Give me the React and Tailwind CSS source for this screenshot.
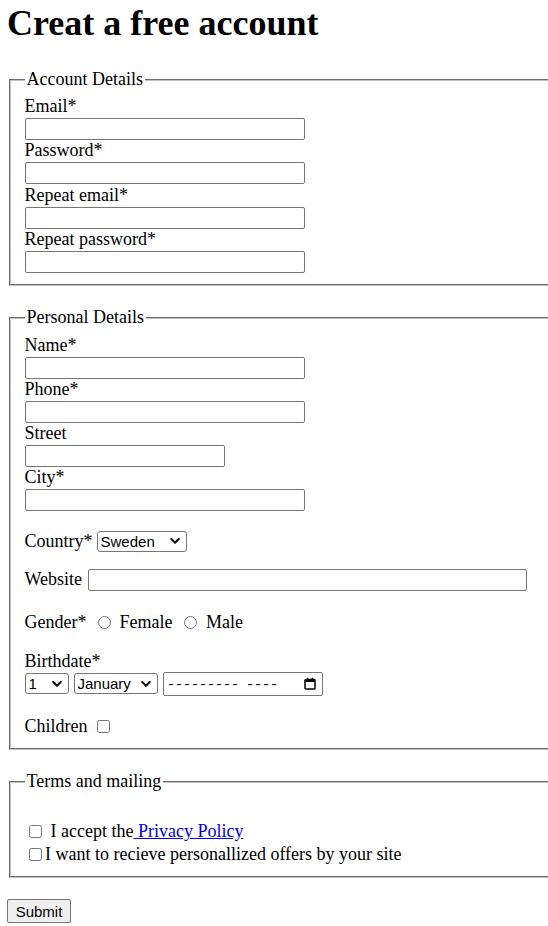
import React from "react";

const inputCls =
  "block h-[22px] border border-[#767676] rounded-[2px] bg-white px-[2px] text-[15px] font-['Liberation_Sans',Arial,sans-serif]";

function Field({ label, widthCls }) {
  return (
    <div className="flex flex-col items-start">
      <label className="h-[20.7px]">{label}</label>
      <input type="text" className={`${inputCls} ${widthCls} mt-[1.3px] mb-[0.2px]`} />
    </div>
  );
}

function Chevron() {
  return (
    <svg
      className="pointer-events-none absolute right-[7px] top-1/2 -translate-y-1/2"
      width="10"
      height="7"
      viewBox="0 0 10 7"
      fill="none"
    >
      <path d="M1.2 1.4 L5 5.2 L8.8 1.4" stroke="#000" strokeWidth="2" strokeLinecap="round" strokeLinejoin="round" />
    </svg>
  );
}

function Select({ widthCls, options, value, extra = "" }) {
  return (
    <div className={`relative ${widthCls} ${extra} h-[21px]`}>
      <select
        defaultValue={value}
        className="h-full w-full appearance-none border border-[#767676] rounded-[3px] bg-white pl-[3px] text-black text-[15px] font-['Liberation_Sans',Arial,sans-serif]"
      >
        {options.map((o) => (
          <option key={o}>{o}</option>
        ))}
      </select>
      <Chevron />
    </div>
  );
}

function CalendarIcon() {
  return (
    <svg width="12" height="13" viewBox="0 0 12 13" fill="none">
      <rect x="1" y="2.5" width="10" height="9.5" rx="0.8" stroke="#000" strokeWidth="1.5" />
      <rect x="1" y="2.5" width="10" height="2.5" fill="#000" />
      <rect x="2.8" y="0.8" width="1.6" height="2" fill="#000" />
      <rect x="7.6" y="0.8" width="1.6" height="2" fill="#000" />
    </svg>
  );
}

export default function App() {
  return (
    <div className="w-[548px] min-h-[926px] overflow-hidden bg-white text-black font-['Liberation_Serif','Times_New_Roman',serif] text-[18px] leading-[normal]">
      <div className="w-[600px] px-[7px] pt-[2px]">
        <h1 className="text-[36px] font-bold leading-[normal]">Creat a free account</h1>
        <form className="mt-[25px]" onSubmit={(e) => e.preventDefault()}>
          <fieldset className="mx-[2px] border-2 [border-style:groove] border-[#c0c0c0] px-[13.5px] pt-[6.3px] pb-[11.25px]">
            <legend className="px-[2px]">Account Details</legend>
            <Field label="Email*" widthCls="w-[280px]" />
            <Field label="Password*" widthCls="w-[280px]" />
            <Field label="Repeat email*" widthCls="w-[280px]" />
            <Field label="Repeat password*" widthCls="w-[280px]" />
          </fieldset>

          <fieldset className="mt-[21px] mx-[2px] border-2 [border-style:groove] border-[#c0c0c0] px-[13.5px] pt-[6.3px] pb-[11.25px]">
            <legend className="px-[2px]">Personal Details</legend>
            <Field label="Name*" widthCls="w-[280px]" />
            <Field label="Phone*" widthCls="w-[280px]" />
            <Field label="Street" widthCls="w-[200px]" />
            <Field label="City*" widthCls="w-[280px]" />

            <div className="mt-[19.4px] flex h-[21px] items-center">
              <span>Country*</span>
              <Select widthCls="w-[90px]" extra="ml-[4px]" value="Sweden" options={["Sweden", "Norway", "Denmark", "Finland"]} />
            </div>

            <div className="mt-[17px] flex h-[22px] items-center">
              <span>Website</span>
              <input type="text" className={`${inputCls} ml-[5.5px] w-[439px]`} />
            </div>

            <div className="mt-[21.3px] flex h-[20.7px] items-center">
              <span>Gender*</span>
              <input type="radio" name="gender" className="ml-[12px] h-[13px] w-[13px]" />
              <span className="ml-[8px]">Female</span>
              <input type="radio" name="gender" className="ml-[11.5px] h-[13px] w-[13px]" />
              <span className="ml-[9px]">Male</span>
            </div>

            <div className="mt-[18px] h-[20.7px]">Birthdate*</div>
            <div className="mt-[0.7px] flex h-[24px] items-center">
              <Select widthCls="w-[44px]" value="1" options={["1", "2", "3", "4", "5"]} />
              <Select widthCls="w-[84px]" extra="ml-[5px]" value="January" options={["January", "February", "March"]} />
              <div className="ml-[5px] flex h-[24px] w-[160px] items-center border border-[#767676] rounded-[2px] bg-white pl-[5px] pr-[6px] text-[15px] font-['Liberation_Sans',Arial,sans-serif]">
                <span className="tracking-[3px]">---------</span>
                <span className="ml-[7px] tracking-[3px]">----</span>
                <span className="ml-auto flex items-center">
                  <CalendarIcon />
                </span>
              </div>
            </div>

            <div className="mt-[20.2px] flex h-[20.7px] items-center">
              <span>Children</span>
              <input type="checkbox" className="ml-[9.5px] h-[13px] w-[13px]" />
            </div>
          </fieldset>

          <fieldset className="mt-[21px] mx-[2px] border-2 [border-style:groove] border-[#c0c0c0] px-[13.5px] pt-[6.3px] pb-[11.25px]">
            <legend className="px-[2px]">Terms and mailing</legend>
            <div className="h-[20.7px]" />
            <div className="flex h-[23px] items-end">
              <input type="checkbox" className="ml-[4px] mb-[4.5px] h-[13px] w-[13px]" />
              <span className="ml-[9px]">
                I accept the
                <a href="#" className="text-[#0000ee] underline">
                  {" "}Privacy Policy
                </a>
              </span>
            </div>
            <div className="flex h-[23px] items-end">
              <input type="checkbox" className="ml-[4px] mb-[4.5px] h-[13px] w-[13px]" />
              <span className="ml-[3.5px]">I want to recieve personallized offers by your site</span>
            </div>
          </fieldset>

          <button
            type="submit"
            className="mt-[21px] h-[24px] w-[64px] border border-[#767676] rounded-[2px] bg-[#efefef] text-[15px] text-black font-['Liberation_Sans',Arial,sans-serif]"
          >
            Submit
          </button>
        </form>
      </div>
    </div>
  );
}
